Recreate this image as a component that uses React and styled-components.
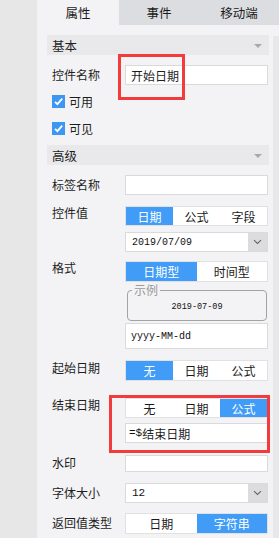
import React from "react";
import styled, { createGlobalStyle } from "styled-components";

const Global = createGlobalStyle`
  html, body { margin: 0; padding: 0; }
  body {
    font-family: "Noto Sans CJK SC", "Noto Sans", sans-serif;
    font-size: 12px;
    color: #1e1e1e;
    background: #f3f3f5;
  }
  * { box-sizing: border-box; }
`;

const Page = styled.div`
  display: flex;
  width: 279px;
  height: 538px;
  overflow: hidden;
`;

const Strip = styled.div`
  width: 37px;
  flex: none;
  background: #e7e7e7;
`;

const Panel = styled.div`
  flex: 1;
  display: flex;
  flex-direction: column;
  background: #f3f3f5;
`;

const Tabs = styled.div`
  display: flex;
  height: 25px;
  flex: none;
`;

const Tab = styled.div`
  flex: ${(p) => (p.$active ? "0 0 82px" : "1")};
  display: flex;
  align-items: center;
  justify-content: center;
  font-size: 12.5px;
  line-height: 25px;
  color: #1a1a1a;
  background: ${(p) => (p.$active ? "#f3f3f5" : "#dcdde0")};
`;

const Body = styled.div`
  flex: 1;
  display: flex;
`;

const Content = styled.div`
  width: 222px;
  margin-left: 10px;
  margin-top: 10px;
  display: flex;
  flex-direction: column;
`;

const Track = styled.div`
  width: 6px;
  margin-left: 4px;
  margin-top: 11px;
  background: #e8e8ea;
`;

const Header = styled.div`
  height: 20px;
  margin-top: ${(p) => p.$mt || 0}px;
  background: #e9e9eb;
  padding: 0 7px 0 5px;
  display: flex;
  align-items: center;
  justify-content: space-between;
  font-size: 12.5px;
`;

const Caret = styled.span`
  width: 0;
  height: 0;
  border-left: 4px solid transparent;
  border-right: 4px solid transparent;
  border-top: 4px solid #a9a9ab;
  margin-top: 2px;
`;

const Row = styled.div`
  display: grid;
  grid-template-columns: 73px 143px;
  padding-left: 5px;
  margin-top: ${(p) => p.$mt || 0}px;
`;

const Label = styled.div`
  line-height: 20px;
  font-size: 12px;
  white-space: nowrap;
  margin-top: ${(p) => p.$dy || 0}px;
`;

const Fields = styled.div`
  position: relative;
  display: flex;
  flex-direction: column;
  gap: ${(p) => p.$gap || 0}px;
`;

const Input = styled.div`
  height: ${(p) => p.$h || 20}px;
  background: #fff;
  border: 1px solid #dadada;
  padding-left: ${(p) => p.$pl || 5}px;
  display: flex;
  align-items: center;
  font-size: 12px;
  white-space: nowrap;
`;

const Mono = styled.span`
  font-family: "Liberation Mono", "DejaVu Sans Mono", monospace;
  font-size: ${(p) => p.$size || 10}px;
  color: #111;
`;

const Select = styled.div`
  height: 20px;
  background: #fff;
  border: 1px solid #dadada;
  display: flex;
  align-items: stretch;
`;

const SelectValue = styled.div`
  flex: 1;
  display: flex;
  align-items: center;
  padding-left: 6px;
`;

const ArrowBtn = styled.div`
  width: 19px;
  background: #dcdcdf;
  display: flex;
  align-items: center;
  justify-content: center;
`;

const Segmented = styled.div`
  display: flex;
  height: ${(p) => p.$h || 21}px;
  background: #fff;
  border: 1px solid #e1e1e3;
`;

const Seg = styled.div`
  flex: 1;
  display: flex;
  align-items: center;
  justify-content: center;
  font-size: 12px;
  color: ${(p) => (p.$on ? "#fff" : "#1a1a1a")};
  background: ${(p) => (p.$on ? "#409cf7" : "#fff")};
`;

const Frame = styled.div`
  position: relative;
  height: 31px;
  margin: 0 1px 0 2px;
  border: 1px solid #a3a3a3;
  border-radius: 4px;
  display: flex;
  align-items: center;
  justify-content: center;
  padding-top: 2px;
`;

const Legend = styled.span`
  position: absolute;
  left: 4px;
  top: -8px;
  padding: 0 2px;
  background: #f3f3f5;
  font-size: 12px;
  line-height: 14px;
  color: #9a9a9a;
`;

const CheckRow = styled.div`
  display: flex;
  align-items: center;
  gap: 4px;
  height: 20px;
  padding-left: 5px;
  margin-top: ${(p) => p.$mt || 0}px;
`;

const Box = styled.span`
  width: 13px;
  height: 13px;
  background: #3d97f2;
  display: flex;
  align-items: center;
  justify-content: center;
`;

const Highlight = styled.div`
  position: absolute;
  left: ${(p) => p.$l}px;
  top: ${(p) => p.$t}px;
  width: ${(p) => p.$w}px;
  height: ${(p) => p.$hh}px;
  border: 3px solid #f23b3d;
  pointer-events: none;
`;

const Chevron = () => (
  <svg width="9" height="6" viewBox="0 0 9 6">
    <path d="M1 1.2 L4.5 4.4 L8 1.2" fill="none" stroke="#666" strokeWidth="1.1" />
  </svg>
);

const Check = () => (
  <svg width="11" height="11" viewBox="0 0 11 11">
    <path d="M2 5.8 L4.4 8.2 L9.2 2.6" fill="none" stroke="#fff" strokeWidth="1.8" />
  </svg>
);

export default function App() {
  return (
    <>
      <Global />
      <Page>
        <Strip />
        <Panel>
          <Tabs>
            <Tab $active>属性</Tab>
            <Tab>事件</Tab>
            <Tab>移动端</Tab>
          </Tabs>
          <Body>
            <Content>
              <Header>
                <span>基本</span>
                <Caret />
              </Header>

              <Row $mt={10}>
                <Label>控件名称</Label>
                <Fields>
                  <Input>开始日期</Input>
                  <Highlight $l={-7} $t={-11} $w={67} $hh={46} />
                </Fields>
              </Row>

              <CheckRow $mt={6}>
                <Box><Check /></Box>
                <span>可用</span>
              </CheckRow>
              <CheckRow $mt={7}>
                <Box><Check /></Box>
                <span>可见</span>
              </CheckRow>

              <Header $mt={7}>
                <span>高级</span>
                <Caret />
              </Header>

              <Row $mt={10}>
                <Label>标签名称</Label>
                <Fields>
                  <Input />
                </Fields>
              </Row>

              <Row $mt={11}>
                <Label $dy={-3}>控件值</Label>
                <Fields $gap={6}>
                  <Segmented $h={20}>
                    <Seg $on>日期</Seg>
                    <Seg>公式</Seg>
                    <Seg>字段</Seg>
                  </Segmented>
                  <Select>
                    <SelectValue><Mono>2019/07/09</Mono></SelectValue>
                    <ArrowBtn><Chevron /></ArrowBtn>
                  </Select>
                </Fields>
              </Row>

              <Row $mt={9}>
                <Label $dy={-3}>格式</Label>
                <Fields>
                  <Segmented>
                    <Seg $on>日期型</Seg>
                    <Seg>时间型</Seg>
                  </Segmented>
                  <div style={{ height: 8 }} />
                  <Frame>
                    <Legend>示例</Legend>
                    <Mono $size={8.5}>2019-07-09</Mono>
                  </Frame>
                  <div style={{ height: 2 }} />
                  <Input $h={26}>
                    <Mono>yyyy-MM-dd</Mono>
                  </Input>
                </Fields>
              </Row>

              <Row $mt={11}>
                <Label $dy={-2}>起始日期</Label>
                <Fields>
                  <Segmented>
                    <Seg $on>无</Seg>
                    <Seg>日期</Seg>
                    <Seg>公式</Seg>
                  </Segmented>
                </Fields>
              </Row>

              <Row $mt={17}>
                <Label $dy={-3}>结束日期</Label>
                <Fields $gap={5}>
                  <Segmented $h={20}>
                    <Seg>无</Seg>
                    <Seg>日期</Seg>
                    <Seg $on>公式</Seg>
                  </Segmented>
                  <Input $pl={3}>
                    <Mono $size={11}>=$</Mono>结束日期
                  </Input>
                  <Highlight $l={-16} $t={-3} $w={161} $hh={58} />
                </Fields>
              </Row>

              <Row $mt={12}>
                <Label $dy={-2}>水印</Label>
                <Fields>
                  <Input $h={17} />
                </Fields>
              </Row>

              <Row $mt={10}>
                <Label>字体大小</Label>
                <Fields>
                  <Select>
                    <SelectValue><Mono $size={11}>12</Mono></SelectValue>
                    <ArrowBtn><Chevron /></ArrowBtn>
                  </Select>
                </Fields>
              </Row>

              <Row $mt={10}>
                <Label>返回值类型</Label>
                <Fields>
                  <Segmented>
                    <Seg>日期</Seg>
                    <Seg $on>字符串</Seg>
                  </Segmented>
                </Fields>
              </Row>
            </Content>
            <Track />
          </Body>
        </Panel>
      </Page>
    </>
  );
}
